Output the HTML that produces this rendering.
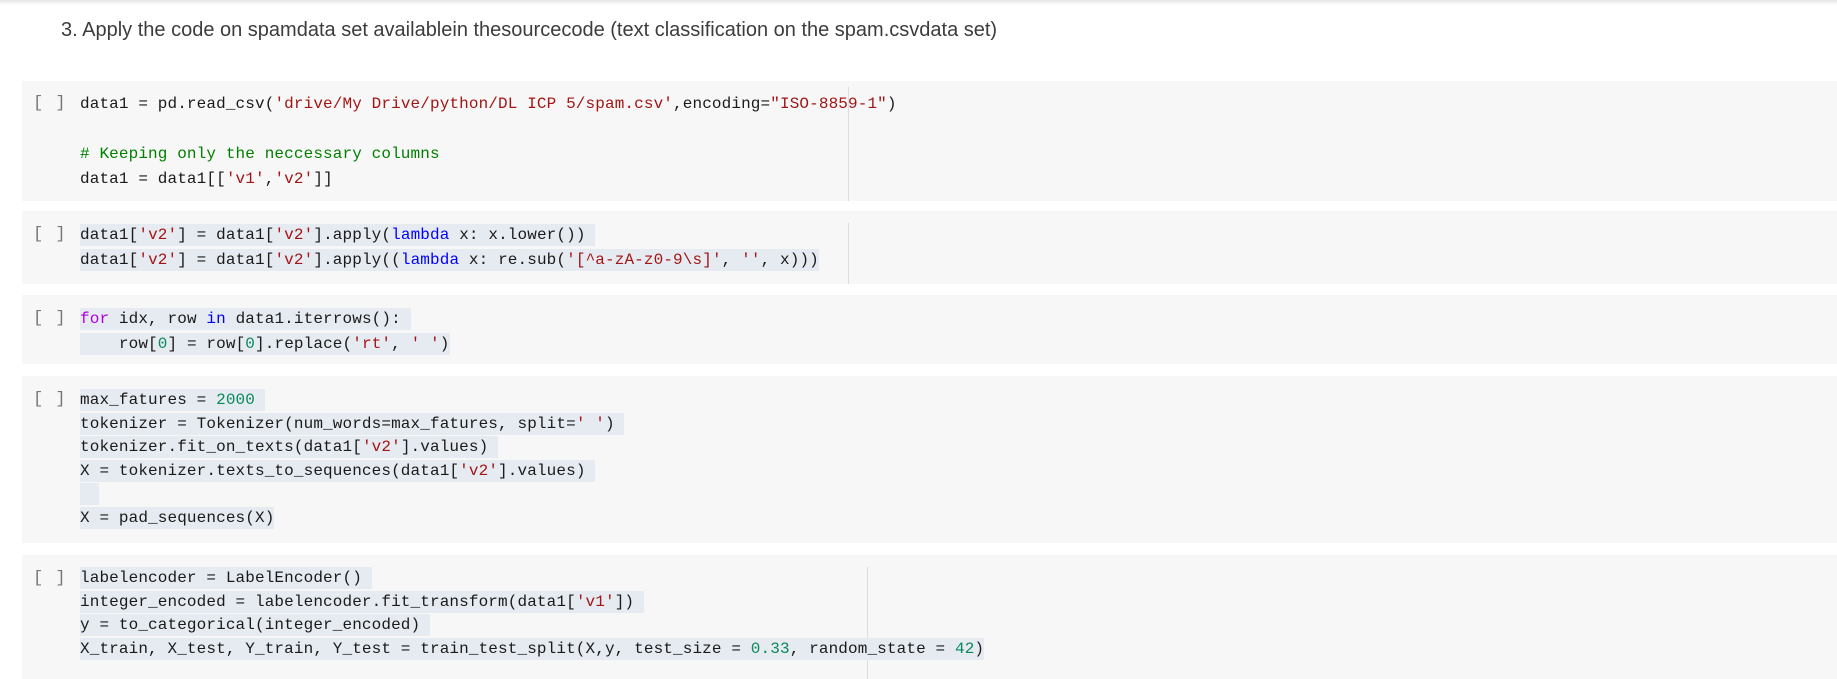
<!DOCTYPE html>
<html><head><meta charset="utf-8"><style>
html,body{margin:0;padding:0;background:#fff;width:1837px;height:679px;overflow:hidden;position:relative}
.top{position:absolute;left:0;top:0;width:1837px;height:5px;background:linear-gradient(#e4e4e4,#fff)}
.title{position:absolute;left:61px;top:19px;font:20px "Liberation Sans",sans-serif;color:#3c3c3c;white-space:nowrap}
.cell{position:absolute;left:22px;width:1815px;background:#f7f7f7}
.br{position:absolute;left:11px;font:17px "Liberation Mono",monospace;color:#777;letter-spacing:1px}
.code{position:absolute;left:58px;font:16px "Liberation Mono",monospace;letter-spacing:0.12px;color:#1a1a1a;white-space:nowrap}
.l{height:25px;line-height:25px;white-space:pre}
.m .l{height:23.5px;line-height:23.5px}
.h{background:#e6ebf2;padding:2px 0}
.s{color:#a31515}.c{color:#008000}.n{color:#09885a}.k{color:#af00db}.b{color:#0000ff}
.vl{position:absolute;width:1px;background:#ddd}
</style></head><body>
<div class="top"></div>
<div class="title">3. Apply the code on spamdata set availablein thesourcecode (text classification on the spam.csvdata set)</div>

<div class="cell" style="top:81px;height:120px">
<div class="br" style="top:13px">[ ]</div>
<div class="vl" style="left:826px;top:6px;height:114px"></div>
<div class="code" style="top:11px"><div class="l">data1 = pd.read_csv(<span class="s">'drive/My Drive/python/DL ICP 5/spam.csv'</span>,encoding=<span class="s">"ISO-8859-1"</span>)</div><div class="l"> </div><div class="l"><span class="c"># Keeping only the neccessary columns</span></div><div class="l">data1 = data1[[<span class="s">'v1'</span>,<span class="s">'v2'</span>]]</div></div></div>

<div class="cell" style="top:211px;height:73px">
<div class="br" style="top:14px">[ ]</div>
<div class="vl" style="left:826px;top:12px;height:61px"></div>
<div class="code" style="top:12px"><div class="l"><span class="h">data1[<span class="s">'v2'</span>] = data1[<span class="s">'v2'</span>].apply(<span class="b">lambda</span> x: x.lower()) </span></div><div class="l"><span class="h">data1[<span class="s">'v2'</span>] = data1[<span class="s">'v2'</span>].apply((<span class="b">lambda</span> x: re.sub(<span class="s">'[^a-zA-z0-9\s]'</span>, <span class="s">''</span>, x)))</span></div></div></div>

<div class="cell" style="top:295px;height:69px">
<div class="br" style="top:14px">[ ]</div>
<div class="code" style="top:12px"><div class="l"><span class="h"><span class="k">for</span> idx, row <span class="b">in</span> data1.iterrows(): </span></div><div class="l"><span class="h">    row[<span class="n">0</span>] = row[<span class="n">0</span>].replace(<span class="s">'rt'</span>, <span class="s">' '</span>)</span></div></div></div>

<div class="cell" style="top:376px;height:167px">
<div class="br" style="top:14px">[ ]</div>
<div class="code m" style="top:13px"><div class="l"><span class="h">max_fatures = <span class="n">2000</span> </span></div><div class="l"><span class="h">tokenizer = Tokenizer(num_words=max_fatures, split=<span class="s">' '</span>) </span></div><div class="l"><span class="h">tokenizer.fit_on_texts(data1[<span class="s">'v2'</span>].values) </span></div><div class="l"><span class="h">X = tokenizer.texts_to_sequences(data1[<span class="s">'v2'</span>].values) </span></div><div class="l"><span class="h">  </span></div><div class="l"><span class="h">X = pad_sequences(X)</span></div></div></div>

<div class="cell" style="top:555px;height:124px">
<div class="br" style="top:14px">[ ]</div>
<div class="vl" style="left:845px;top:12px;height:112px"></div>
<div class="code m" style="top:12px"><div class="l"><span class="h">labelencoder = LabelEncoder() </span></div><div class="l"><span class="h">integer_encoded = labelencoder.fit_transform(data1[<span class="s">'v1'</span>]) </span></div><div class="l"><span class="h">y = to_categorical(integer_encoded) </span></div><div class="l"><span class="h">X_train, X_test, Y_train, Y_test = train_test_split(X,y, test_size = <span class="n">0.33</span>, random_state = <span class="n">42</span>)</span></div></div></div>
</body></html>
